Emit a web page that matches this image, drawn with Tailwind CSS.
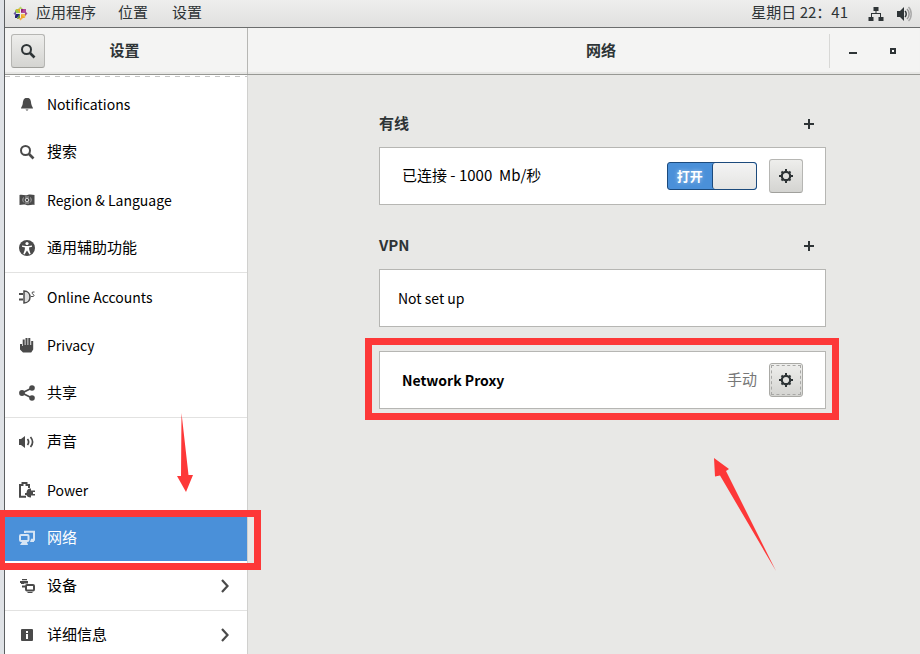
<!DOCTYPE html>
<html lang="zh-CN">
<head>
<meta charset="utf-8">
<meta name="viewport" content="width=device-width, initial-scale=1">
<title>设置</title>
<script src="https://cdn.jsdelivr.net/npm/@tailwindcss/browser@4"></script>
</head>
<body class="relative h-screen overflow-hidden bg-[#dfe2e6] pl-1 font-['Noto_Sans_CJK_SC',sans-serif] text-[15px] leading-5 text-black">
<svg class="hidden">
  <symbol id="search" viewBox="0 0 16 16"><circle cx="6.5" cy="6.5" r="4.5" fill="none" stroke="currentColor" stroke-width="2"/><path d="M10 10l4.500 4.500" stroke="currentColor" stroke-width="2.600"/></symbol>
  <symbol id="gear" viewBox="0 0 16 16"><circle cx="8" cy="8" r="4.200" fill="none" stroke="currentColor" stroke-width="2.200"/><path d="M8 1v3M8 12v3M1 8h3M12 8h3M3.500 3.500l2 2M12.500 3.500l-2 2M3.500 12.500l2-2M12.500 12.500l-2-2" stroke="currentColor" stroke-width="2"/></symbol>
  <symbol id="plus" viewBox="0 0 10 10"><path d="M4 0h2v4h4v2H6v4H4V6H0V4h4z" fill="currentColor"/></symbol>
  <symbol id="chevron" viewBox="0 0 8 14"><path d="M1 1l5.500 6L1 13" fill="none" stroke="currentColor" stroke-width="2.200"/></symbol>
</svg>
<div class="flex h-full flex-col border-l border-[#5c5f61]">
  <nav class="flex h-7 shrink-0 items-center border-b border-[#6b6d6d] bg-linear-to-b from-[#eeeeed] to-[#e0e0df] pl-2 pr-2 text-[#2e3436] [&_a]:pb-1 [&_time]:pb-1">
    <svg class="mr-2 size-[15px]" viewBox="0 0 15 15" aria-hidden="true">
      <path d="M3 3h4v4H5z" fill="#efa72a"/><path d="M8 3h3L10 6 8 7z" fill="#932279"/>
      <path d="M9 6l2-3h2v4H9z" fill="#b04a98"/><path d="M8 8h5l-1 4-2-1z" fill="#f3c04c"/>
      <path d="M8 8l4 4H8z" fill="#efa72a"/><path d="M7 8v5H4l1-3z" fill="#6a9a3a"/>
      <path d="M7 8l-3 4H2V8z" fill="#262577"/><path d="M7 7H2V4l2-1z" fill="#9ccd4a"/>
      <path d="M7.500.5L10 3H5z" fill="#b9d66a"/><path d="M14.500 7.500L12 10V5z" fill="#a04a90"/><path d="M7.500 14.500L5 12h5z" fill="#efb04c"/><path d="M.5 7.500L3 5v5z" fill="#6a5aa0"/>
      <path d="M7.500 4v7M4 7.500h7" stroke="#eee"/>
    </svg>
    <a href="#apps" class="mr-[22px]">应用程序</a>
    <a href="#places" class="mr-6">位置</a>
    <a href="#settings">设置</a>
    <time class="ml-auto mr-5 whitespace-pre">星期日 22：41</time>
    <svg class="mr-3 size-4" viewBox="0 0 16 16" aria-label="网络"><path d="M5.500 1h5v4h-2v2H13v4h2.500v4h-5v-4H12V8H4v3h1.500v4h-5v-4H3V7h4.500V5h-2z" fill="#2e3436"/></svg>
    <svg class="size-4" viewBox="0 0 16 16" aria-label="音量"><path d="M1 5h3l4-4v14l-4-4H1z" fill="#2e3436"/><path d="M9 5c1.600 1.500 1.600 4.500 0 6" fill="none" stroke="#2e3436" stroke-width="1.500"/><path d="M11 3c2.800 2.500 2.800 7.500 0 10" fill="none" stroke="#999" stroke-width="1.500"/><path d="M12.500 1c3.600 3.500 3.600 10.500 0 14" fill="none" stroke="#aaa" stroke-width="1.500"/></svg>
  </nav>
  <header class="flex h-[47px] shrink-0 border-b border-[#979894] bg-[#f4f4f3] font-bold text-[#2e3436] shadow-[inset_0_-2px_1px_#e6e6e4]">
    <div class="flex w-[243px] shrink-0 items-center border-r border-[#b6b6b3] pl-[6px] pr-[43px]">
      <button aria-label="搜索" class="flex size-[34px] items-center justify-center rounded-[3px] border border-[#b6b6b3] border-b-[#a0a09c] bg-linear-to-b from-[#eeeeec] to-[#d4d4d1]"><svg class="size-4"><use href="#search"/></svg></button>
      <h1 class="flex-1 pb-[2px] text-center">设置</h1>
    </div>
    <h2 class="flex-1 self-center pb-[2px] pl-[125px] text-center">网络</h2>
    <div class="my-[6px] flex w-[91px] items-center border-l border-[#d8d8d6] pl-[17px]">
      <button aria-label="最小化" class="mr-[31px] flex h-4 w-3 items-center justify-center"><span class="mt-1 h-[2px] w-2 bg-[#2e3436]"></span></button>
      <button aria-label="最大化" class="size-[6px] border-2 border-[#2e3436] bg-white"></button>
    </div>
  </header>
  <div class="flex min-h-0 flex-1">
    <aside class="w-[243px] shrink-0 overflow-hidden border-r border-[#d0d0ce] bg-white pt-px">
      <div class="mb-1 h-px bg-[repeating-linear-gradient(90deg,#c4c4c4_0_5px,#fff_5px_10px)]"></div>
      <ul class="-mt-px text-[#4a4a4a] [&_a]:flex [&_a]:h-12 [&_a]:items-center [&_a]:pl-[14px] [&_a]:pr-[15px] [&_span]:ml-3 [&_span]:flex-1 [&_span]:pb-[2px] [&_span]:text-black [&_span:lang(en)]:pb-0 [&_span:lang(en)]:text-[14px] [&_svg]:size-4">
        <li><a href="#n"><svg viewBox="0 0 16 16"><path d="M6.500 2h3c2.500 1 2.500 4 2.800 6 .2 2 1.700 3 1.700 4.500H2C2 11 3.500 10 3.700 8 4 6 4 3 6.500 2zM6.500 13.500h3l-.8 1h-1.400z" fill="currentColor"/></svg><span lang="en">Notifications</span></a></li>
        <li><a href="#s"><svg><use href="#search"/></svg><span>搜索</span></a></li>
        <li><a href="#r"><svg viewBox="0 0 16 16"><path d="M.5 3c3-1 5 1 8 0s5 0 7 0v10c-3-1-5 1-8 0s-5 0-7 0z" fill="currentColor"/><circle cx="8" cy="8" r="1.800" fill="none" stroke="#ddd"/><path d="M4.500 5.500c-1 2-1 3.500.5 5M11.500 5.500c1 2 1 3.500-.5 5M6 5h4M6 11h4" fill="none" stroke="#aaa"/></svg><span lang="en">Region &amp; Language</span></a></li>
        <li class="border-b border-[#e2e2e1]"><a href="#a"><svg viewBox="0 0 16 16"><circle cx="8" cy="8" r="8" fill="currentColor"/><circle cx="8" cy="3.500" r="1.600" fill="#fff"/><path d="M3 5.500l3.500.5h3l3.500-.5v1.300l-3 .8.300 2.400 1.400 4-1.200.4L8 10.500l-2.500 3.900-1.200-.4 1.400-4L6 7.600l-3-.8z" fill="#fff"/></svg><span>通用辅助功能</span></a></li>
        <li><a href="#o"><svg viewBox="0 0 16 16"><path d="M0 5h4M0 10.500h4" stroke="currentColor" stroke-width="2"/><path d="M5 2c4 0 6 3 6 6s-2 6-6 6z" fill="#ddd" stroke="currentColor" stroke-width="1.500"/><path d="M15.500 3h-2c-1 1.500 0 2 1 2.500s.5 2-.5 2h-2" fill="none" stroke="currentColor"/></svg><span lang="en">Online Accounts</span></a></li>
        <li><a href="#p"><svg viewBox="0 0 16 16"><path d="M1 7h2v2h.7V2.500h2V8h.8V1h2v7h.8V1h2v7h.9V4h2v8.500l-2 3H4L1 12.500z" fill="currentColor"/></svg><span lang="en">Privacy</span></a></li>
        <li class="border-b border-[#e2e2e1]"><a href="#h"><svg viewBox="0 0 16 16"><path d="M13 3L3 8l10 5" fill="none" stroke="currentColor" stroke-width="1.800"/><g fill="currentColor"><circle cx="13" cy="3" r="2.800"/><circle cx="3" cy="8" r="2.900"/><circle cx="13" cy="13" r="2.800"/></g></svg><span>共享</span></a></li>
        <li><a href="#v"><svg viewBox="0 0 16 16"><path d="M0 5h2l4-3v12l-4-3H0z" fill="currentColor"/><path d="M8.500 5c1.500 2 1.500 4 0 6M11.500 3c2.500 3 2.500 7 0 10" fill="none" stroke="currentColor" stroke-width="1.700"/></svg><span>声音</span></a></li>
        <li><a href="#w"><svg viewBox="0 0 16 16"><path d="M7 14.800H1V3h2.500V1h4v2H10v3" fill="none" stroke="currentColor" stroke-width="2"/><path d="M12 6.500v2h4v1.500h-2v2h2v1.500h-4v2c-3 0-4-1-4.500-2.500H6v-2h1.500C8 7.500 9 6.500 12 6.500z" fill="currentColor"/></svg><span lang="en">Power</span></a></li>
        <li class="border-t-[3px] border-b border-white bg-[#4a90d9] text-[#d6e5f5]"><a href="#net" aria-current="page" class="h-11! pb-[2px]"><svg viewBox="0 0 16 16"><path d="M6 3V1.700h9v8h-3" fill="none" stroke="currentColor" stroke-width="2"/><rect x="1" y="5" width="8.500" height="6" rx="1" fill="none" stroke="currentColor" stroke-width="2"/><path d="M3 12h5l1 3H1zM12 9h3v3h-4z" fill="currentColor"/></svg><span class="text-white!">网络</span></a></li>
        <li class="border-b border-[#e2e2e1]"><a href="#d"><svg viewBox="0 0 16 16"><path d="M3 1h5v1.200H3zM1 3h8v2.500H5V6H2V5H1zM3 7.500h3v2H3z" fill="currentColor"/><rect x="7" y="7" width="8" height="5.500" rx="1" fill="none" stroke="currentColor" stroke-width="2"/><path d="M8.500 14h5v1h-5z" fill="currentColor"/></svg><span>设备</span><svg class="size-[14px]!"><use href="#chevron"/></svg></a></li>
        <li><a href="#i"><svg viewBox="0 0 16 16"><rect x="2" y="2" width="12" height="12" rx="1" fill="currentColor"/><path d="M7 4h2v2H7zM7 7h2v5H7z" fill="#fff"/></svg><span>详细信息</span><svg class="size-[14px]!"><use href="#chevron"/></svg></a></li>
      </ul>
    </aside>
    <main class="flex-1 bg-[#e8e8e6] pl-[131px] pr-[94px] pt-[39px] text-[#2e3436]">
      <div class="mb-[13px] flex h-5 items-center justify-between pr-3 font-bold"><h3 class="pb-[2px]">有线</h3><button aria-label="添加有线"><svg class="size-[10px]"><use href="#plus"/></svg></button></div>
      <section class="flex h-[58px] items-center border border-[#b6b6b3] bg-white px-[22px] text-black">
        <span class="flex-1 pb-[2px]">已连接 - 1000&nbsp; Mb/秒</span>
        <label class="mr-3 flex h-7 w-[90px] overflow-hidden rounded-[3px] border border-[#1c4a7c] bg-[#4a90d9] text-[13px] font-bold text-white">
          <input type="checkbox" role="switch" checked class="sr-only"><span class="flex flex-1 items-center justify-center [text-shadow:0_0_4px_#ffffff88]">打开</span><span class="flex-1 rounded-[3px] border-l border-[#1c4a7c] bg-linear-to-b from-[#f4f4f4] to-[#e4e4e2]"></span>
        </label>
        <button aria-label="有线选项" class="flex size-[34px] items-center justify-center rounded-[3px] border border-[#b6b6b3] border-b-[#a0a09c] bg-linear-to-b from-[#eeeeec] to-[#d4d4d1] text-[#2e3436]"><svg class="size-4"><use href="#gear"/></svg></button>
      </section>
      <div class="mb-[13px] mt-[31px] flex h-5 items-center justify-between pr-3 font-bold"><h3 class="pb-[2px]">VPN</h3><button aria-label="添加 VPN"><svg class="size-[10px]"><use href="#plus"/></svg></button></div>
      <section lang="en" class="flex h-[58px] items-center border border-[#b6b6b3] bg-white px-[18px] text-[14px] text-black">Not set up</section>
      <section class="relative mt-6 flex h-[58px] items-center border border-[#b6b6b3] bg-white px-[22px] text-black">
        <span lang="en" class="flex-1 text-[14px] font-bold">Network Proxy</span><span class="mr-3 pb-[2px] text-[#777]">手动</span>
        <button aria-label="代理选项" class="flex size-[34px] items-center justify-center rounded-[3px] border border-[#aaaaa6] bg-linear-to-b from-[#eeeeec] to-[#d4d4d1] p-px text-[#2e3436]"><span class="flex size-full items-center justify-center border border-dashed border-[#a8a8a6]"><svg class="size-4"><use href="#gear"/></svg></span></button>
        <div class="pointer-events-none absolute -bottom-3 -left-[15px] -right-[14px] -top-[14px] border-[7px] border-[#fd3838]"></div>
      </section>
    </main>
  </div>
</div>
<div class="pointer-events-none absolute -left-[2px] top-[510px] h-[60px] w-[263px] border-[7px] border-[#fd3838]"></div>
<svg class="pointer-events-none absolute left-[177px] top-[413px] h-20 w-4" viewBox="0 0 16 80"><path d="M4.500 0L4 63H0l9 16 7-17h-4.500z" fill="#fd3838"/></svg>
<svg class="pointer-events-none absolute left-[713px] top-[458px] h-[114px] w-16" viewBox="0 0 64 114"><path d="M1 0l15 11-3 2 50 100L7 17.500 2 18.500z" fill="#fd3838"/></svg>
</body>
</html>
